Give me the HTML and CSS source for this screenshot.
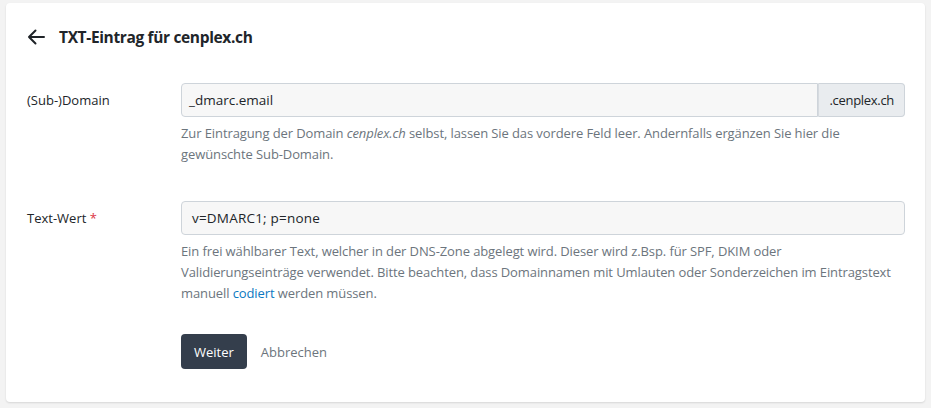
FILE: index.html
```html
<!DOCTYPE html>
<html lang="de">
<head>
<meta charset="utf-8">
<title>TXT-Eintrag</title>
<link rel="stylesheet" href="styles.css">
</head>
<body>
<div class="card">
  <div class="title-row">
    <svg class="back" width="18" height="16" viewBox="0 0 18 16" aria-hidden="true"><path d="M17 8H2M8.5 1.5L2 8l6.5 6.5" fill="none" stroke="#1f2328" stroke-width="2" stroke-linecap="round" stroke-linejoin="round"/></svg>
    <h1 class="title">TXT-Eintrag für cenplex.ch</h1>
  </div>

  <div class="form-row first">
    <label class="label">(Sub-)Domain</label>
    <div class="field">
      <div class="input-group">
        <div class="input">_dmarc.email</div>
        <div class="addon">.cenplex.ch</div>
      </div>
      <p class="help">Zur Eintragung der Domain <em>cenplex.ch</em> selbst, lassen Sie das vordere Feld leer. Andernfalls ergänzen Sie hier die gewünschte Sub-Domain.</p>
    </div>
  </div>

  <div class="form-row second">
    <label class="label">Text-Wert <span class="req">*</span></label>
    <div class="field">
      <div class="input single">v=DMARC1; p=none</div>
      <p class="help">Ein frei wählbarer Text, welcher in der DNS-Zone abgelegt wird. Dieser wird z.Bsp. für SPF, DKIM oder Validierungseinträge verwendet. Bitte beachten, dass Domainnamen mit Umlauten oder Sonderzeichen im Eintragstext manuell <a href="#" class="link">codiert</a> werden müssen.</p>
    </div>
  </div>

  <div class="form-row actions">
    <div></div>
    <div class="buttons">
      <button class="btn-primary">Weiter</button>
      <button class="btn-link">Abbrechen</button>
    </div>
  </div>
</div>
</body>
</html>
```

FILE: styles.css
```css
html, body {
  margin: 0;
  padding: 0;
  background: #f3f3f3;
}
body {
  padding: 3px 6px 6px 6px;
  font-family: "Open Sans", "Noto Sans", "Liberation Sans", sans-serif;
  color: #212529;
  font-size: 13px;
}
.card {
  width: 919px;
  height: 399px;
  box-sizing: border-box;
  background: #fff;
  border-radius: 4px;
  box-shadow: 0 1px 2px rgba(0,0,0,0.12);
  padding: 22px 20px 0 21px;
}
.title-row {
  display: flex;
  align-items: center;
  height: 24px;
}
.back {
  margin-left: 0;
  margin-right: 14px;
}
.title {
  margin: 0;
  font-size: 15.5px;
  font-weight: 700;
  letter-spacing: -0.35px;
  line-height: 24px;
  color: #212529;
}
.form-row {
  display: grid;
  grid-template-columns: 154px 1fr;
}
.form-row.first { margin-top: 34px; }
.form-row.second { margin-top: 36px; }
.form-row.actions { margin-top: 30px; }
.label {
  line-height: 34px;
  color: #212529;
}
.req { color: #dc3545; }
.input-group {
  display: flex;
  height: 34px;
}
.input {
  flex: 1;
  height: 34px;
  box-sizing: border-box;
  border: 1px solid #ced4da;
  border-radius: 4px 0 0 4px;
  background: #f7f7f7;
  padding: 0 11px 0 7px;
  line-height: 32px;
  font-size: 13.5px;
  color: #212529;
}
.input.single {
  border-radius: 4px;
  padding-left: 10px;
  letter-spacing: 0.2px;
}
.addon {
  height: 34px;
  box-sizing: border-box;
  border: 1px solid #ced4da;
  border-left: 1px solid #d6dadf;
  border-radius: 0 4px 4px 0;
  background: #e9ecef;
  padding: 0 10px 0 10px;
  line-height: 32px;
  letter-spacing: -0.3px;
  color: #212529;
}
.help {
  margin: 6px 0 0 0;
  line-height: 21px;
  color: #6c757d;
  font-size: 13px;
  letter-spacing: -0.1px;
}
.link {
  color: #0b78c1;
  text-decoration: none;
}
.buttons {
  display: flex;
  align-items: center;
}
.btn-primary {
  height: 35px;
  padding: 0 13px;
  background: #343e4c;
  color: #fff;
  border: 0;
  border-radius: 4px;
  font-family: inherit;
  font-size: 13px;
}
.btn-link {
  margin-left: 2px;
  padding: 0 12px;
  background: none;
  border: 0;
  color: #6c757d;
  font-family: inherit;
  font-size: 13px;
}
```
